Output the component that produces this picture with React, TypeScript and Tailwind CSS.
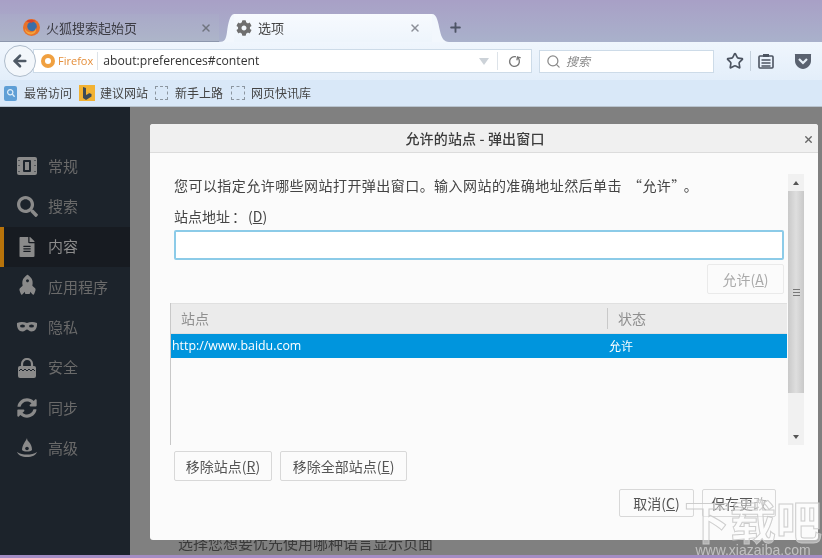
import React from 'react';
import { FaCog, FaSearch, FaFileAlt, FaRocket, FaSyncAlt } from 'react-icons/fa';
import { ArrowLeft, RotateCw, Search, Star, Plus, X } from 'lucide-react';

const GeneralIcon = () => (
  <svg width="20" height="20" viewBox="0 0 20 20">
    <rect x="0" y="1" width="20" height="18" rx="2" fill="#8a8a8a" />
    <rect x="6" y="4" width="8" height="12" rx="1" fill="#1c232b" />
    <rect x="8" y="6" width="4" height="8" fill="#8a8a8a" />
    <path d="M2 4v1M2 9v1M2 15v1M18 4v1M18 9v1M18 15v1" stroke="#1c232b" strokeWidth="1" />
  </svg>
);

const MaskIcon = () => (
  <svg width="22" height="20" viewBox="0 0 22 20">
    <path d="M1 6c4-1.500 7-1 10 0 3-1 6-1.500 10 0 .5 5-2 8.500-5.500 8.500-2 0-3.500-2-4.500-2s-2.500 2-4.500 2C3 14.500.5 11 1 6z" fill="#8a8a8a" />
    <ellipse cx="6.500" cy="9" rx="2.500" ry="1.500" fill="#1c232b" />
    <ellipse cx="15.500" cy="9" rx="2.500" ry="1.500" fill="#1c232b" />
  </svg>
);

const LockIcon = () => (
  <svg width="20" height="20" viewBox="0 0 20 20">
    <path d="M5 9V6a5 5 0 0 1 10 0v3" fill="none" stroke="#8a8a8a" strokeWidth="2.200" />
    <rect x="1" y="8" width="18" height="12" rx="2" fill="#8a8a8a" />
    <path d="M2 13l2-2 2 2 2-2 2 2 2-2 2 2 2-2 2 2" fill="none" stroke="#1c232b" strokeWidth="1" />
  </svg>
);

const HatIcon = () => (
  <svg width="22" height="20" viewBox="0 0 22 20">
    <path d="M11 0c-1 3-5 7-5 12 2 2 8 2 10 0 0-3-1-6-3-8-1-1-2-2-2-4z" fill="#8a8a8a" />
    <circle cx="11" cy="10.500" r="1.800" fill="#1c232b" />
    <path d="M1 14c3 2 6 2.500 10 2.500s7-.5 10-2.500c-1 3-5 5-10 5S2 17 1 14z" fill="#8a8a8a" />
  </svg>
);

const FoxIcon = ({ size = 16 }: { size?: number }) => (
  <svg width={size} height={size} viewBox="0 0 16 16">
    <circle cx="8" cy="8" r="8" fill="#e8722a" />
    <circle cx="8.500" cy="7" r="4.500" fill="#3a6ea8" />
    <path d="M2 9c1 3 4 4 6.500 3.500 2-.5 3.500-2 3.500-4 1 3-1 6-4.500 6S1.500 12 2 9z" fill="#f3a53a" />
    <path d="M3 2c3-2 7-1.500 9 0-2 0-3 1-3.500 1.500C6 3 4 3 3 2z" fill="#d9452b" />
  </svg>
);

const menuItems = [
  { label: '常规', icon: <GeneralIcon /> },
  { label: '搜索', icon: <FaSearch size={21} /> },
  { label: '内容', icon: <FaFileAlt size={20} />, active: true },
  { label: '应用程序', icon: <FaRocket size={19} className="-rotate-45" /> },
  { label: '隐私', icon: <MaskIcon /> },
  { label: '安全', icon: <LockIcon /> },
  { label: '同步', icon: <FaSyncAlt size={20} /> },
  { label: '高级', icon: <HatIcon /> },
];

const DialogButton = ({ children, className }: { children: React.ReactNode; className: string }) => (
  <button className={`h-[30px] border border-[#d8d8d8] bg-[#fbfbfb] rounded-[2px] text-[14px] text-[#555] ${className}`}>
    {children}
  </button>
);

export default function App() {
  return (
    <div
      className="relative w-[822px] h-[558px] overflow-hidden flex flex-col bg-[#808080] blur-[0.35px]"
      style={{ fontFamily: '"Noto Sans CJK SC", "Liberation Sans", sans-serif' }}
    >
      {/* tab strip */}
      <div className="h-[42px] shrink-0 flex items-end bg-gradient-to-b from-[#a8a0c6] to-[#a9b1cb]">
        <div className="w-[219px] h-[28px] flex items-center pl-[23px] pr-[7px] border-b border-[#8d97ad] bg-gradient-to-b from-[#a9a9c8] to-[#adb5c9] text-[13px] text-[#3c3c44]">
          <FoxIcon size={17} />
          <span className="ml-[6px] flex-1">火狐搜索起始页</span>
          <X size={12} strokeWidth={3} className="text-[#70747f]" />
        </div>
        <svg width="15" height="28" viewBox="0 0 15 28" className="shrink-0">
          <path d="M0 28c6 0 7-3 8-10 1-8 3-18 7-18v28z" fill="#f2f7fd" />
        </svg>
        <div className="w-[198px] h-[28px] flex items-center pl-[2px] pr-[11px] bg-gradient-to-b from-[#f7fafe] to-[#eef5fc] text-[13px] text-[#444]">
          <FaCog size={16} className="text-[#6f6f6f]" />
          <span className="ml-[6px] flex-1">选项</span>
          <X size={12} strokeWidth={3} className="text-[#8b8f98]" />
        </div>
        <svg width="17" height="28" viewBox="0 0 17 28" className="shrink-0">
          <path d="M0 0c5 0 6 8 8 17 1.500 7 4 11 9 11H0z" fill="#f2f7fd" />
        </svg>
        <Plus size={15} strokeWidth={3} className="-ml-[1px] mb-[7px] text-[#4e5566]" />
      </div>

      {/* nav bar */}
      <div className="h-[38px] shrink-0 flex items-center bg-gradient-to-b from-[#f0f6fd] to-[#e3eefa]">
        <div className="relative z-10 ml-[4px] w-[32px] h-[32px] rounded-full bg-[#f3f7fb] border border-[#aebccb] flex items-center justify-center">
          <ArrowLeft size={18} strokeWidth={3.5} className="text-[#4f5a66]" />
        </div>
        <div className="-ml-[3px] w-[499px] h-[24px] flex items-center bg-white border border-[#cddbe8]">
          <span className="ml-[7px] w-[14px] h-[14px] rounded-full bg-[#f0a040] flex items-center justify-center">
            <span className="w-[6px] h-[6px] rounded-full bg-white" />
          </span>
          <span className="ml-[3px] text-[11px] text-[#e58f3b]" style={{ fontFamily: '"Open Sans", sans-serif' }}>Firefox</span>
          <span className="ml-[4px] w-px h-[18px] bg-[#dde3e9]" />
          <span className="ml-[5px] flex-1 text-[12.200px] text-[#333]" style={{ fontFamily: '"Open Sans", sans-serif' }}>about:preferences#content</span>
          <span className="w-0 h-0 border-x-[5px] border-x-transparent border-t-[7px] border-t-[#ccd2d8]" />
          <span className="ml-[8px] w-px h-[18px] bg-[#dde3e9]" />
          <RotateCw size={13} strokeWidth={2.5} className="mx-[10px] text-[#777] -scale-x-100 rotate-[100deg]" />
        </div>
        <div className="ml-[7px] w-[175px] h-[23px] flex items-center bg-white border border-[#cddbe8]">
          <Search size={15} strokeWidth={2} className="ml-[6px] text-[#8a8a8a]" />
          <span className="ml-[5px] text-[12px] italic text-[#888]">搜索</span>
        </div>
        <Star size={18} strokeWidth={2.2} className="ml-[12px] text-[#4b5360]" />
        <span className="ml-[6px] w-px h-[20px] bg-[#c4d0dc]" />
        <svg width="16" height="16" viewBox="0 0 16 16" className="ml-[7px]">
          <rect x="1" y="3" width="14" height="12" rx="1" fill="none" stroke="#4b5360" strokeWidth="1.600" />
          <rect x="5" y="1" width="6" height="3" fill="#4b5360" />
          <path d="M3.500 7h9M3.500 10h9M3.500 13h9" stroke="#4b5360" strokeWidth="1.300" />
        </svg>
        <svg width="18" height="17" viewBox="0 0 18 17" className="ml-[20px]">
          <path d="M1 1h16a1 1 0 0 1 0 1v6c0 4-4 8-8 8s-8-4-8-8V2a1 1 0 0 1 0-1z" fill="#5a6270" />
          <path d="M5 6l4 4 4-4" fill="none" stroke="#e8f0f8" strokeWidth="2.200" />
        </svg>
      </div>

      {/* bookmarks */}
      <div className="h-[27px] shrink-0 flex items-center bg-[#d9e8f8] border-b border-[#b9c4cf] text-[12px] text-[#444]">
        <span className="ml-[4px] w-[13px] h-[15px] rounded-[2px] bg-[#5f9fd6] flex items-center justify-center">
          <FaSearch size={8} className="text-[#dfeefa]" />
        </span>
        <span className="ml-[7px]">最常访问</span>
        <span className="ml-[7px] w-[16px] h-[16px] bg-[#f2b233] flex items-center justify-center">
          <svg width="10" height="13" viewBox="0 0 10 13"><path d="M1 0l3 1v7l3-1.500-1.500-1 4 1.500v2.500L4 13 1 11z" fill="#3d4a57" /></svg>
        </span>
        <span className="ml-[5px]">建议网站</span>
        <span className="ml-[7px] w-[13px] h-[14px] border border-dashed border-[#8c96a0]" />
        <span className="ml-[7px]">新手上路</span>
        <span className="ml-[8px] w-[14px] h-[14px] border border-dashed border-[#8c96a0]" />
        <span className="ml-[6px]">网页快讯库</span>
      </div>

      {/* dimmed preferences page */}
      <div className="flex-1 flex min-h-0">
        <div className="w-[130px] shrink-0 bg-[#1c232b] pt-[39px]">
          {menuItems.map((item) => (
            <div
              key={item.label}
              className={`h-[40.300px] flex items-center border-l-[4px] ${
                item.active ? 'border-[#b8730a] bg-[#171b21] text-[#8c8c8c]' : 'border-transparent text-[#6a6a6a]'
              }`}
            >
              <span className="w-[22px] ml-[12px] flex justify-center text-[#8a8a8a]">{item.icon}</span>
              <span className="ml-[10px] text-[15px]">{item.label}</span>
            </div>
          ))}
        </div>
        <div className="flex-1 flex flex-col justify-end pl-[48px] pb-[2px]">
          <div className="text-[15px] leading-[18px] text-[#3a3a3a] pb-[1px]">选择您想要优先使用哪种语言显示页面</div>
        </div>
      </div>
      <div className="h-[3px] shrink-0 bg-[#a48cc4]" />

      {/* dialog */}
      <div className="absolute left-[150px] top-[124px] w-[668px] h-[416px] rounded-[3px] bg-[#fbfbfb] flex flex-col">
        <div className="relative h-[29px] shrink-0 bg-[#f0f0f0] border-b border-[#dcdcdc] rounded-t-[3px] flex items-center justify-center pr-[18px]">
          <span className="text-[14px] tracking-[0.15px] font-medium text-[#3c3c3c]">允许的站点 - 弹出窗口</span>
          <X size={11} strokeWidth={3} className="absolute right-[4px] top-[10px] text-[#666]" />
        </div>
        <div className="flex flex-1 min-h-0 pl-[20px] pr-[14px] pt-[21px]">
          <div className="w-[617px] shrink-0 flex flex-col">
            <p className="pl-[4px] text-[14px] leading-[22px] tracking-[0.45px] text-[#444] whitespace-nowrap">
              您可以指定允许哪些网站打开弹出窗口。输入网站的准确地址然后单击<span className="ml-[6px]">“允许”</span><span className="ml-[5px]">。</span>
            </p>
            <label className="pl-[4px] mt-[10px] text-[14px] leading-[20px] text-[#444]">站点地址<span className="mx-[2px]">：</span>(<span className="underline">D</span>)</label>
            <div className="ml-[4px] mt-[4px] w-[610px] h-[30px] shrink-0 bg-white border-2 border-[#8ccbe8] rounded-[2px]" />
            <div className="mt-[4px] flex justify-end pr-[3px]">
              <DialogButton className="w-[77px] text-[#aaa]! border-[#eaeaea]!">允许(<span className="underline">A</span>)</DialogButton>
            </div>
            <div className="mt-[9px] h-[142px] flex flex-col border-l border-[#c8c8c8]">
              <div className="h-[31px] shrink-0 flex items-center bg-[#ebebeb] border-y border-[#e0e0e0] text-[14px] text-[#8f8f8f]">
                <span className="w-[437px] pl-[10px] border-r border-[#c9c9c9]">站点</span>
                <span className="pl-[10px]">状态</span>
              </div>
              <div className="h-[24px] shrink-0 flex items-center bg-[#0095dd] text-white text-[12px]">
                <span className="w-[437px] pl-[1px] text-[12.400px]" style={{ fontFamily: '"Open Sans", sans-serif' }}>http://www.baidu.com</span>
                <span className="pl-[1px]">允许</span>
              </div>
            </div>
            <div className="mt-[6px] pl-[4px] flex gap-[8px]">
              <DialogButton className="w-[98px]">移除站点(<span className="underline">R</span>)</DialogButton>
              <DialogButton className="w-[127px]">移除全部站点(<span className="underline">E</span>)</DialogButton>
            </div>
            <div className="mt-[8px] flex gap-[8px] pl-[449px]">
              <DialogButton className="w-[75px] h-[28px]!">取消(<span className="underline">C</span>)</DialogButton>
              <DialogButton className="w-[74px] h-[28px]! whitespace-nowrap">保存更<span className="text-[#b5b5b5]">改</span></DialogButton>
            </div>
          </div>
          <div className="ml-[1px] w-[16px] h-[271px] shrink-0 flex flex-col bg-[#f1f1f1]">
            <div className="h-[17px] shrink-0 flex items-center justify-center">
              <span className="w-0 h-0 border-x-[3px] border-x-transparent border-b-[4px] border-b-[#555]" />
            </div>
            <div className="h-[202px] flex flex-col items-center justify-center gap-[2px] bg-gradient-to-r from-[#c9c9c9] via-[#dedede] to-[#c9c9c9]">
              <span className="w-[7px] h-px bg-[#777]" />
              <span className="w-[7px] h-px bg-[#777]" />
              <span className="w-[7px] h-px bg-[#777]" />
            </div>
            <div className="flex-1 flex items-end justify-center pb-[6px]">
              <span className="w-0 h-0 border-x-[3px] border-x-transparent border-t-[4px] border-t-[#555]" />
            </div>
          </div>
        </div>
      </div>

      {/* watermark */}
      <div className="absolute right-0 bottom-0 w-[138px] h-[64px] flex flex-col items-center justify-end pointer-events-none">
        <span
          className="text-[46px] leading-[50px] font-bold text-white/40 whitespace-nowrap"
          style={{ WebkitTextStroke: '1px rgba(200,200,200,0.9)' }}
        >
          下载吧
        </span>
        <span className="text-[14px] leading-[13px] pb-[1px] text-white/50" style={{ fontFamily: '"Liberation Sans", sans-serif' }}>www.xiazaiba.com</span>
      </div>
    </div>
  );
}
